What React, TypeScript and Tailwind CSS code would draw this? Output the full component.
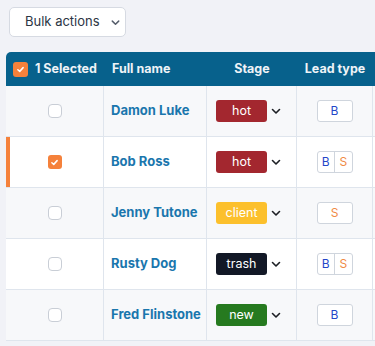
import React from "react";

type Row = { name: string; stage: string; stageCls: string; types: string[]; checked?: boolean };

const rows: Row[] = [
  { name: "Damon Luke", stage: "hot", stageCls: "bg-[#a3272f]", types: ["B"] },
  { name: "Bob Ross", stage: "hot", stageCls: "bg-[#a3272f]", types: ["B", "S"], checked: true },
  { name: "Jenny Tutone", stage: "client", stageCls: "bg-[#fcc02c]", types: ["S"] },
  { name: "Rusty Dog", stage: "trash", stageCls: "bg-[#121826]", types: ["B", "S"] },
  { name: "Fred Flinstone", stage: "new", stageCls: "bg-[#267a1f]", types: ["B"] },
];

const Chevron = ({ cls }: { cls: string }) => (
  <svg viewBox="0 0 12 12" className={cls} fill="none" stroke="currentColor" strokeWidth="1.6" strokeLinecap="round" strokeLinejoin="round">
    <path d="M2.5 4.5 6 8l3.5-3.5" />
  </svg>
);

const Check = () => (
  <svg viewBox="0 0 12 12" className="w-[9px] h-[9px]" fill="none" stroke="white" strokeWidth="2" strokeLinecap="round" strokeLinejoin="round">
    <path d="M2.5 6.3 5 8.5 9.5 3.5" />
  </svg>
);

export default function App() {
  return (
    <div className="w-[375px] h-[346px] overflow-hidden bg-[#f1f2f7] font-['Inter',sans-serif]">
      <div className="pt-[7px] pl-[9px]">
        <button className="h-[30px] w-[117px] flex items-center gap-[10px] pl-[15px] whitespace-nowrap bg-white border border-[#d6dae2] rounded-[5px] text-[13px] text-[#2b3544]">
          <span>Bulk actions</span>
          <Chevron cls="w-[11px] h-[11px] text-[#555d6b] shrink-0" />
        </button>
      </div>
      <div className="mt-[15px] ml-[6px] rounded-tl-[5px] overflow-hidden bg-white">
        <div className="grid grid-cols-[98px_103px_90px_76px_1fr] h-[34px] bg-[#07618c] text-[#eef3f7] text-[12.5px] font-bold items-center">
          <div className="flex items-center pl-[7px] gap-[7px] whitespace-nowrap">
            <span className="w-[15px] h-[15px] rounded-[3px] bg-[#f5813b] flex items-center justify-center">
              <Check />
            </span>
            <span>1 Selected</span>
          </div>
          <div className="pl-[8px]">Full name</div>
          <div className="text-center">Stage</div>
          <div className="text-center">Lead type</div>
          <div />
        </div>
        {rows.map((r, i) => (
          <div
            key={r.name}
            className={`grid grid-cols-[98px_103px_90px_76px_1fr] h-[51px] border-b border-[#dfe5ed] ${i % 2 === 0 ? "bg-[#f7f8fa]" : "bg-white"}`}
          >
            <div className={`flex items-center justify-center border-r border-[#dfe5ed] ${r.checked ? "border-l-[4px] border-l-[#f5813b] pr-[4px]" : ""}`}>
              {r.checked ? (
                <span className="w-[14px] h-[14px] rounded-[3px] bg-[#f5813b] flex items-center justify-center">
                  <Check />
                </span>
              ) : (
                <span className="w-[14px] h-[14px] rounded-[4px] border border-[#c9ced6] bg-white" />
              )}
            </div>
            <div className="flex items-center pl-[7px] border-r border-[#dfe5ed] text-[13px] font-bold text-[#1a76ad] whitespace-nowrap">
              {r.name}
            </div>
            <div className="flex items-center pl-[9px] gap-[3px] border-r border-[#dfe5ed]">
              <span className={`w-[51px] h-[22px] rounded-[3px] ${r.stageCls} text-white text-[12.5px] flex items-center justify-center`}>
                {r.stage}
              </span>
              <Chevron cls="w-[12px] h-[12px] text-[#1c1f24]" />
            </div>
            <div className="flex items-center justify-center border-r border-[#dfe5ed]">
              <div className="w-[36px] h-[22px] rounded-[3px] border border-[#cfd5dd] bg-white flex text-[12px]">
                {r.types.map((t, j) => (
                  <span
                    key={t}
                    className={`flex-1 flex items-center justify-center ${t === "B" ? "text-[#2446c9]" : "text-[#f08a45]"} ${j > 0 ? "border-l border-[#cfd5dd]" : ""}`}
                  >
                    {t}
                  </span>
                ))}
              </div>
            </div>
            <div />
          </div>
        ))}
      </div>
    </div>
  );
}
